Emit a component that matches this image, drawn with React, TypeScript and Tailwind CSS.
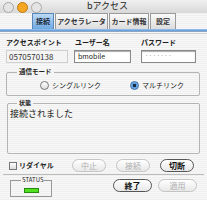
import React from "react";

const F = { fontFamily: '"Noto Sans CJK JP", "DejaVu Sans", sans-serif' };

function Light({ color, border }: { color: string; border: string }) {
  return (
    <div
      className="w-[11px] h-[11px] rounded-full"
      style={{ background: color, border: `1px solid ${border}` }}
    />
  );
}

function Tab({ label, active, w }: { label: string; active?: boolean; w: string }) {
  return (
    <div
      className={
        "h-[16px] flex items-center justify-center text-[7px] font-bold border border-b-0 " +
        w +
        (active
          ? " bg-[linear-gradient(#bcd9f5,#6ea9e3)] border-[#5b86b8] text-[#1b2a3c]"
          : " bg-[linear-gradient(#fafafa,#dcdcdc)] border-[#9a9a9a] text-[#333]")
      }
    >
      {label}
    </div>
  );
}

function Btn({ label, disabled, w }: { label: string; disabled?: boolean; w: string }) {
  return (
    <div
      className={
        "h-[13px] rounded-full flex items-center justify-center text-[8px] bg-[linear-gradient(#ffffff,#e8e8e8)] border " +
        w +
        (disabled ? " border-[#c4c4c4] text-[#b0b0b0]" : " border-[#555] text-[#111] font-bold")
      }
    >
      {label}
    </div>
  );
}

export default function App() {
  return (
    <div
      className="w-[207px] h-[200px] overflow-hidden bg-[repeating-linear-gradient(0deg,#efefef_0px,#efefef_1px,#f8f8f8_1px,#f8f8f8_2px)] relative"
      style={F}
    >
      {/* title bar */}
      <div className="h-[13px] flex items-center relative bg-[linear-gradient(#f0f0f0,#d8d8d8)]">
        <div className="flex gap-[3px] pl-[3px] pt-[1px]">
          <Light color="#e4e4e4" border="#a8a8a8" />
          <Light color="#f5a623" border="#c07a10" />
          <Light color="#e4e4e4" border="#a8a8a8" />
        </div>
        <div className="absolute left-[87px] top-[-1px] text-[9px] text-[#222]">bアクセス</div>
      </div>
      {/* tabs */}
      <div className="flex pl-[32px] gap-[1px] h-[16px] items-end">
        <Tab label="接続" active w="w-[22px]" />
        <Tab label="アクセラレータ" w="w-[53px]" />
        <Tab label="カード情報" w="w-[40px]" />
        <Tab label="設定" w="w-[26px]" />
      </div>
      <div className="h-[3px] bg-[linear-gradient(#9cc4ee,#5d98d8)] border-b border-[#8aa6c4]" />
      <div className="h-[1px] mt-[1px] bg-[#d0d0d0]" />

      <div className="px-[6px]">
        {/* labels */}
        <div className="flex text-[7px] text-[#222] font-bold h-[10px] mt-[3px] items-center">
          <div className="w-[69px]">アクセスポイント</div>
          <div className="w-[66px]">ユーザー名</div>
          <div>パスワード</div>
        </div>
        {/* inputs */}
        <div className="flex mt-[3px] h-[13px]">
          <div className="w-[62px] h-[13px] border border-[#cfcfcf] bg-[#f4f4f4] text-[8px] text-[#333] pl-[2px] leading-[11px]">
            0570570138
          </div>
          <div className="w-[57px] h-[13px] ml-[6px] border border-[#8a8a8a] bg-white text-[7px] text-[#222] pl-[3px] leading-[11px] shadow-[inset_0_1px_1px_#aaa]">
            bmobile
          </div>
          <div className="w-[55px] h-[13px] ml-[10px] border border-[#8a8a8a] bg-white text-[6px] text-[#555] pl-[3px] leading-[10px] shadow-[inset_0_1px_1px_#aaa] tracking-[0.5px]">
            ·······
          </div>
        </div>
        {/* 通信モード */}
        <div className="relative mt-[9px] h-[24px] border border-[#b4b4b4] rounded-[2px] mr-[1px] flex items-center text-[7px] text-[#222]">
          <div className="absolute left-[10px] top-[-6px] px-[2px] bg-[#f4f4f4] font-bold text-[6.5px]">通信モード</div>
          <div className="flex items-center ml-[33px] mt-[2px]">
            <div className="w-[9px] h-[9px] rounded-full border border-[#777] bg-[linear-gradient(#ffffff,#dcdcdc)]" />
            <div className="ml-[3px]">シングルリンク</div>
          </div>
          <div className="flex items-center ml-[29px] mt-[2px]">
            <div className="w-[9px] h-[9px] rounded-full border border-[#3c6ca8] bg-[radial-gradient(circle,#1a2a40_0px,#1a2a40_1.5px,#5c9be0_2px,#9ec8f2_5px)]" />
            <div className="ml-[3px]">マルチリンク</div>
          </div>
        </div>
        {/* 状態 */}
        <div className="relative mt-[7px] h-[51px] border border-[#b4b4b4] rounded-[2px] mr-[1px] ml-[1px]">
          <div className="absolute left-[9px] top-[-6px] px-[2px] bg-[#f4f4f4] font-bold text-[6px] text-[#222]">状態</div>
          <div className="pl-[2px] pt-[4px] text-[9px] text-[#222] leading-[11px]">接続されました</div>
        </div>
        {/* action row */}
        <div className="flex items-center mt-[5px] h-[13px]">
          <div className="flex items-center ml-[3px] w-[63px]">
            <div className="w-[8px] h-[8px] border border-[#777] bg-[linear-gradient(#ffffff,#dcdcdc)]" />
            <div className="ml-[2px] text-[7px] font-bold text-[#222]">リダイヤル</div>
          </div>
          <Btn label="中止" disabled w="w-[34px]" />
          <div className="w-[10px]" />
          <Btn label="接続" disabled w="w-[34px]" />
          <div className="w-[10px]" />
          <Btn label="切断" w="w-[34px]" />
        </div>
      </div>
      <div className="h-[1px] bg-[#bdbdbd] mt-[2px] mx-[3px]" />
      {/* bottom */}
      <div className="flex items-start mt-[4px] px-[10px]">
        <div className="relative w-[42px] h-[17px] border border-[#9a9a9a] mt-[1px] flex items-center justify-center">
          <div className="absolute left-[10px] top-[-5px] px-[1px] bg-[#f4f4f4] text-[6px] text-[#222] leading-[8px]">STATUS</div>
          <div className="w-[15px] h-[5px] mt-[4px] bg-[#4fe020] border border-[#2b8a10]" />
        </div>
        <div className="ml-[61px]">
          <Btn label="終了" w="w-[39px]" />
        </div>
        <div className="ml-[6px]">
          <Btn label="適用" disabled w="w-[39px]" />
        </div>
      </div>
    </div>
  );
}
